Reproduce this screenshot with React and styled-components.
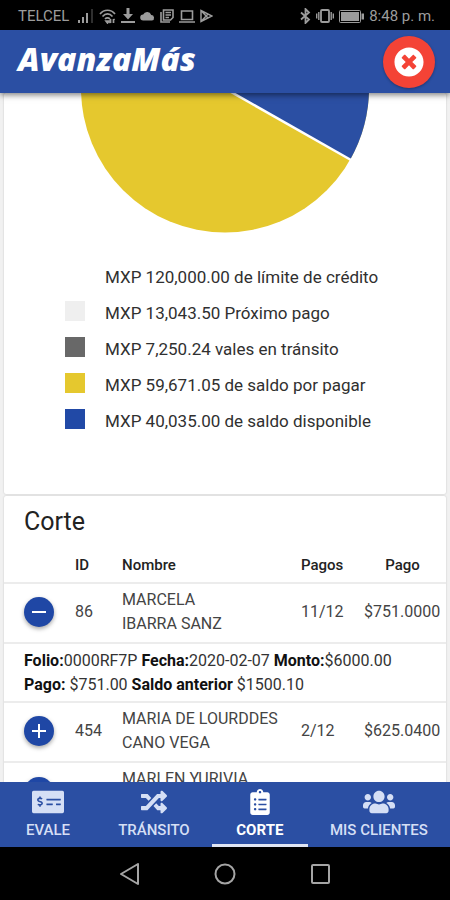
import React, { Fragment, useState } from "react";
import styled, { createGlobalStyle, css } from "styled-components";
import {
  FaClipboardList,
  FaMoneyCheckAlt,
  FaRandom,
  FaTimesCircle,
  FaUsers,
} from "react-icons/fa";

const BLUE = "#2b4fa3";
const YELLOW = "#e5c82e";

const GlobalStyle = createGlobalStyle`
  *, *::before, *::after { box-sizing: border-box; }
  body {
    margin: 0;
    background: #000;
    font-family: Roboto, "Liberation Sans", sans-serif;
    color: #303030;
  }
  button { font: inherit; border: 0; cursor: pointer; }
`;

const Screen = styled.div`
  display: flex;
  flex-direction: column;
  height: 100vh;
  background: #f1f1f1;
`;

const StatusBar = styled.div`
  display: flex;
  align-items: center;
  justify-content: space-between;
  flex: none;
  height: 30px;
  padding: 2px 15px 0 18px;
  background: #000;
  color: #9c9c9c;
  font-size: 15px;
  line-height: 20px;
`;

const StatusGroup = styled.div`
  display: flex;
  align-items: center;
  gap: ${(p) => p.$gap}px;

  svg { display: block; }
`;

const Carrier = styled.span`
  margin-right: 4px;
`;

const AppBar = styled.header`
  display: flex;
  align-items: center;
  justify-content: space-between;
  flex: none;
  height: 63px;
  padding: 0 15px 0 18px;
  background: ${BLUE};
  box-shadow: 0 2px 6px rgba(0, 0, 0, 0.5);
  z-index: 1;
`;

const Brand = styled.h1`
  margin: 0;
  padding-bottom: 6px;
  color: #fff;
  font-family: "Open Sans", sans-serif;
  font-size: 32px;
  font-weight: 800;
  font-style: italic;
  line-height: 40px;
`;

const CloseButton = styled.button`
  display: flex;
  align-items: center;
  justify-content: center;
  width: 52px;
  height: 52px;
  padding: 0;
  border-radius: 50%;
  background: #f44336;
  color: #fff;
  font-size: 30px;
  box-shadow: 0 1px 3px rgba(0, 0, 0, 0.3);
`;

const Content = styled.main`
  display: flex;
  flex-direction: column;
  flex: 1;
  gap: 2px;
  min-height: 0;
  padding: 0 4px;
  overflow: hidden;
`;

const Card = styled.section`
  flex: none;
  background: #fff;
  border-radius: 2px;
  box-shadow: 0 0 2px rgba(0, 0, 0, 0.2);
`;

const SummaryCard = styled(Card)`
  padding-bottom: 55px;
`;

const Chart = styled.svg`
  display: block;
  width: 288px;
  height: 140px;
  margin: 0 auto;
`;

const Legend = styled.ul`
  display: flex;
  flex-direction: column;
  margin: 0;
  padding: 26px 0 0 61px;
  list-style: none;
`;

const LegendItem = styled.li`
  display: flex;
  align-items: center;
  gap: 20px;
  height: 36px;
  font-size: 17px;
  line-height: 24px;
`;

const Swatch = styled.span`
  width: 20px;
  height: 20px;
  margin-bottom: 4px;
  background: ${(p) => p.$color};
`;

const CardTitle = styled.h2`
  margin: 0;
  padding: 10px 20px;
  color: #222;
  font-size: 25px;
  font-weight: 400;
  line-height: 32px;
`;

const Table = styled.table`
  width: 100%;
  table-layout: fixed;
  border-collapse: collapse;
  font-size: 16px;
  line-height: 24px;
`;

const Col = styled.col`
  width: ${(p) => (p.$width ? `${p.$width}px` : "auto")};
`;

const HeadCell = styled.th`
  height: 35px;
  padding: ${(p) => (p.$center ? "0 5px 0 0" : "0")};
  color: #222;
  font-size: 15px;
  font-weight: 500;
  text-align: ${(p) => (p.$center ? "center" : "left")};
`;

const Row = styled.tr`
  height: ${(p) => (p.$detail ? 59 : 60)}px;
  border-top: 2px solid #ececec;
`;

const Cell = styled.td`
  padding: 0 0 2px;
  color: #444;
  white-space: nowrap;
`;

const ActionCell = styled(Cell)`
  padding-left: 20px;
`;

const NameCell = styled(Cell)`
  padding: 4px 0;
  vertical-align: top;
`;

const Name = styled.span`
  display: block;
`;

const DetailCell = styled.td`
  padding: 4px 10px 4px 20px;
  color: #333;
  font-size: 16px;

  p { margin: 0; }
  b { color: #111; font-weight: 700; }
`;

const ToggleButton = styled.button`
  display: flex;
  align-items: center;
  justify-content: center;
  width: 30px;
  height: 30px;
  padding: 0;
  border-radius: 50%;
  background: #1f47a5;
  box-shadow: 0 2px 4px rgba(0, 0, 0, 0.35);
`;

const TabBar = styled.nav`
  display: flex;
  flex: none;
  height: 65px;
  background: ${BLUE};
  z-index: 1;
`;

const Tab = styled.button`
  display: flex;
  flex: 1 0 auto;
  flex-direction: column;
  align-items: center;
  gap: 2px;
  min-width: 96px;
  padding: 4px 21px 0;
  border-bottom: 3px solid transparent;
  background: none;
  color: #d5dff5;
  font-size: 15px;
  font-weight: 500;
  line-height: 20px;

  ${(p) =>
    p.$active &&
    css`
      border-bottom-color: #e0e6f4;
      color: #fff;
      font-weight: 700;
    `}
`;

const TabIcon = styled.span`
  display: flex;
  align-items: center;
  justify-content: center;
  height: 32px;
  font-size: ${(p) => p.$size}px;
`;

const SystemBar = styled.div`
  display: flex;
  align-items: center;
  justify-content: center;
  flex: none;
  gap: 70px;
  height: 53px;
  background: #000;
`;

const SystemButton = styled.button`
  display: flex;
  padding: 0;
  background: none;
  color: #a5a5a5;
`;

const LEGEND = [
  { text: "MXP 120,000.00 de límite de crédito", color: "transparent" },
  { text: "MXP 13,043.50 Próximo pago", color: "#efefef" },
  { text: "MXP 7,250.24 vales en tránsito", color: "#686868" },
  { text: "MXP 59,671.05 de saldo por pagar", color: YELLOW },
  { text: "MXP 40,035.00 de saldo disponible", color: "#2149a6" },
];

const ROWS = [
  {
    id: "86",
    name: ["MARCELA", "IBARRA SANZ"],
    paid: "11/12",
    amount: "$751.0000",
    detail: {
      folio: "0000RF7P",
      date: "2020-02-07",
      total: "$6000.00",
      payment: "$751.00",
      previous: "$1500.10",
    },
  },
  {
    id: "454",
    name: ["MARIA DE LOURDDES", "CANO VEGA"],
    paid: "2/12",
    amount: "$625.0400",
  },
  { id: "", name: ["MARLEN YURIVIA"], paid: "", amount: "" },
];

const TABS = [
  { label: "EVALE", icon: FaMoneyCheckAlt, size: 32 },
  { label: "TRÁNSITO", icon: FaRandom, size: 26 },
  { label: "CORTE", icon: FaClipboardList, size: 26 },
  { label: "MIS CLIENTES", icon: FaUsers, size: 32 },
];

function StatusIconsLeft() {
  return (
    <>
      <svg width="16" height="14" viewBox="0 0 16 14" fill="currentColor" aria-hidden="true">
        <path d="M0 11h2v3H0zM4 8h2v6H4zM8 4h2v10H8z" />
        <path d="M13 0h2v14h-2z" opacity=".3" />
      </svg>
      <svg width="17" height="15" viewBox="0 0 17 15" fill="none" stroke="currentColor" strokeWidth="1.7" aria-hidden="true">
        <path d="M1 5C5 0 12 0 16 5M3.500 7.500c3-3.500 7-3.500 10 0M6 10c1.500-1.600 3.500-1.600 5 0" />
        <path d="M7 12h3l-1.500 2zM11.500 10v4m0 0-1-1m4 1v-4m0 0 1 1" />
      </svg>
      <svg width="14" height="16" viewBox="0 0 14 16" fill="currentColor" aria-hidden="true">
        <path d="M5.500 0h3v6H12l-5 5.500L2 6h3.500zM0 13h14v2H0z" />
      </svg>
      <svg width="15" height="10" viewBox="0 0 15 10" fill="currentColor" aria-hidden="true">
        <path d="M3.200 9.500a3 3 0 0 1 0-6 4.300 4.300 0 0 1 8 0.500 2.800 2.800 0 0 1 .8 5.500z" />
      </svg>
      <svg width="14" height="14" viewBox="0 0 14 14" fill="none" stroke="currentColor" strokeWidth="1.600" aria-hidden="true">
        <path d="M3.500 1H13v7.500L10.500 11h-7zM1 3v10h9M5.500 3.500h5.500M5.500 6h5.500M5.500 8.500H9" />
      </svg>
      <svg width="16" height="13" viewBox="0 0 16 13" fill="none" stroke="currentColor" strokeWidth="1.600" aria-hidden="true">
        <path d="M2.500 1h11v8.500h-11zM0 12h16" />
      </svg>
      <svg width="13" height="14" viewBox="0 0 13 14" fill="none" stroke="currentColor" strokeWidth="1.500" aria-hidden="true">
        <path d="M1 1.500v11L12 7zM1 1.500 8 9M1 12.500 8 5" />
      </svg>
    </>
  );
}

function StatusIconsRight() {
  return (
    <>
      <svg width="11" height="16" viewBox="0 0 11 16" fill="none" stroke="currentColor" strokeWidth="1.800" aria-hidden="true">
        <path d="m1 4.500 8 7L5.500 15V1L9 4.500l-8 7" />
      </svg>
      <svg width="18" height="14" viewBox="0 0 18 14" fill="none" stroke="currentColor" strokeWidth="1.800" aria-hidden="true">
        <rect x="5" y="1" width="8" height="12" rx="1" />
        <path d="M2.800 3v8M15.200 3v8M.7 4.500v5M17.300 4.500v5" strokeWidth="1.400" />
      </svg>
      <svg width="25" height="13" viewBox="0 0 25 13" aria-hidden="true">
        <rect x=".5" y=".5" width="21" height="12" rx="1" fill="none" stroke="currentColor" />
        <path d="M2 2h18v9H2zM22.500 3.500H25v6h-2.500z" fill="currentColor" />
      </svg>
    </>
  );
}

function PieChart() {
  return (
    <Chart viewBox="0 149 288 140" role="img" aria-label="Distribución del crédito">
      <circle cx="144" cy="144.500" r="144" fill={YELLOW} />
      <path d="M144 144.500V.5a144 144 0 0 1 125.300 215z" fill={BLUE} />
      <path d="M144 144.500 270 216" stroke="#fff" strokeWidth="2.500" />
    </Chart>
  );
}

function Detail({ detail }) {
  return (
    <Row $detail>
      <DetailCell colSpan={5}>
        <p>
          <b>Folio:</b>
          {detail.folio} <b>Fecha:</b>
          {detail.date} <b>Monto:</b>
          {detail.total}
        </p>
        <p>
          <b>Pago:</b> {detail.payment} <b>Saldo anterior</b> {detail.previous}
        </p>
      </DetailCell>
    </Row>
  );
}

export default function App() {
  const [expanded, setExpanded] = useState("86");
  const [activeTab, setActiveTab] = useState("CORTE");

  return (
    <>
      <GlobalStyle />
      <Screen>
        <StatusBar>
          <StatusGroup $gap={5}>
            <Carrier>TELCEL</Carrier>
            <StatusIconsLeft />
          </StatusGroup>
          <StatusGroup $gap={5}>
            <StatusIconsRight />
            <span>8:48 p. m.</span>
          </StatusGroup>
        </StatusBar>

        <AppBar>
          <Brand>AvanzaMás</Brand>
          <CloseButton aria-label="Cerrar">
            <FaTimesCircle />
          </CloseButton>
        </AppBar>

        <Content>
          <SummaryCard>
            <PieChart />
            <Legend>
              {LEGEND.map((item) => (
                <LegendItem key={item.text}>
                  <Swatch $color={item.color} />
                  {item.text}
                </LegendItem>
              ))}
            </Legend>
          </SummaryCard>

          <Card>
            <CardTitle>Corte</CardTitle>
            <Table>
              <colgroup>
                <Col $width={71} />
                <Col $width={47} />
                <Col />
                <Col $width={63} />
                <Col $width={82} />
              </colgroup>
              <thead>
                <tr>
                  <HeadCell aria-label="Detalle" />
                  <HeadCell>ID</HeadCell>
                  <HeadCell>Nombre</HeadCell>
                  <HeadCell>Pagos</HeadCell>
                  <HeadCell $center>Pago</HeadCell>
                </tr>
              </thead>
              <tbody>
                {ROWS.map((row) => {
                  const open = expanded === row.id;
                  return (
                    <Fragment key={row.name[0]}>
                      <Row>
                        <ActionCell>
                          <ToggleButton
                            aria-label={open ? "Contraer" : "Expandir"}
                            aria-expanded={open}
                            onClick={() => setExpanded(open ? null : row.id)}
                          >
                            <svg width="14" height="14" viewBox="0 0 14 14" stroke="#fff" strokeWidth="2" aria-hidden="true">
                              <path d={open ? "M0 7h14" : "M0 7h14M7 0v14"} />
                            </svg>
                          </ToggleButton>
                        </ActionCell>
                        <Cell>{row.id}</Cell>
                        <NameCell>
                          {row.name.map((line) => (
                            <Name key={line}>{line}</Name>
                          ))}
                        </NameCell>
                        <Cell>{row.paid}</Cell>
                        <Cell>{row.amount}</Cell>
                      </Row>
                      {open && row.detail && <Detail detail={row.detail} />}
                    </Fragment>
                  );
                })}
              </tbody>
            </Table>
          </Card>
        </Content>

        <TabBar>
          {TABS.map(({ label, icon: Icon, size }) => (
            <Tab
              key={label}
              $active={label === activeTab}
              aria-current={label === activeTab ? "page" : undefined}
              onClick={() => setActiveTab(label)}
            >
              <TabIcon $size={size}>
                <Icon />
              </TabIcon>
              {label}
            </Tab>
          ))}
        </TabBar>

        <SystemBar>
          <SystemButton aria-label="Atrás">
            <svg width="26" height="22" viewBox="0 0 26 22" fill="none" stroke="currentColor" strokeWidth="2" strokeLinejoin="round">
              <path d="M20 1v20L3 11z" />
            </svg>
          </SystemButton>
          <SystemButton aria-label="Inicio">
            <svg width="22" height="22" viewBox="0 0 22 22" fill="none" stroke="currentColor" strokeWidth="2">
              <circle cx="11" cy="11" r="9.500" />
            </svg>
          </SystemButton>
          <SystemButton aria-label="Recientes">
            <svg width="26" height="22" viewBox="0 0 26 22" fill="none" stroke="currentColor" strokeWidth="2">
              <rect x="6" y="2" width="17" height="18" rx="1" />
            </svg>
          </SystemButton>
        </SystemBar>
      </Screen>
    </>
  );
}
